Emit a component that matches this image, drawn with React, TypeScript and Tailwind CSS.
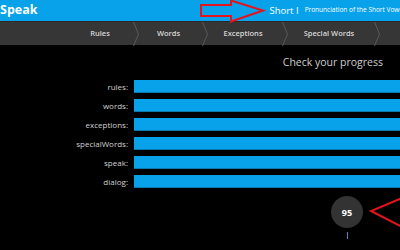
import React from 'react';

const NAV = [
  { label: 'Rules', w: 'w-[62px]' },
  { label: 'Words', w: 'w-[63px]' },
  { label: 'Exceptions', w: 'w-[74px]' },
  { label: 'Special Words', w: 'w-[86px]' },
  { label: 'Speak', w: 'w-[80px]' },
];

const ROWS = ['rules:', 'words:', 'exceptions:', 'specialWords:', 'speak:', 'dialog:'];

const Chevron = () => (
  <svg width="6" height="24" viewBox="0 0 6 24" className="shrink-0">
    <polyline points="0.5,0 5.5,12 0.5,24" fill="none" stroke="#5a5a5a" strokeWidth="1" />
  </svg>
);

export default function App() {
  return (
    <div
      className="relative w-[400px] h-[250px] overflow-hidden bg-black"
      style={{ fontFamily: '"Open Sans", "Liberation Sans", sans-serif' }}
    >
      {/* Header */}
      <div className="h-[21px] bg-[#07a2ea] flex items-center whitespace-nowrap">
        <span className="text-[12.5px] font-bold text-white leading-none">Speak</span>
        <span className="ml-[232px] text-[9.5px] text-white leading-none">Short I</span>
        <span className="ml-[6px] text-[6.5px] font-medium text-white leading-none">
          Pronunciation of the Short Vowel
        </span>
      </div>

      {/* Steps nav */}
      <div className="h-[24px] bg-[#363636] flex items-stretch whitespace-nowrap pl-[71px] border-t border-[#2a2a2a]">
        {NAV.map((n) => (
          <React.Fragment key={n.label}>
            <div className={`${n.w} shrink-0 flex items-center justify-center pr-[4px] text-[7.5px] font-semibold text-[#d6d6d6]`}>
              {n.label}
            </div>
            <Chevron />
          </React.Fragment>
        ))}
      </div>

      {/* Progress */}
      <div className="flex justify-end pr-[17px] pt-[9px]">
        <span className="text-[10.5px] text-[#cfcfcf] leading-[16px]">Check your progress</span>
      </div>

      <div className="mt-[10px] flex flex-col gap-[6px]">
        {ROWS.map((r) => (
          <div key={r} className="flex items-center h-[13px]">
            <div className="w-[128px] shrink-0 text-right text-[8px] text-[#d0d0d0] leading-none">{r}</div>
            <div className="ml-[6px] flex-1 h-[13px] bg-[#07a2ea] border-b border-[#0b79ad]" />
          </div>
        ))}
      </div>

      <div className="mt-[8px] ml-[331px] flex flex-col items-center w-[32px]">
        <div className="w-[32px] h-[32px] rounded-full bg-[#333333] flex items-center justify-center">
          <span className="text-[9px] font-bold text-white leading-none">95</span>
        </div>
        <div className="mt-[4px] w-px h-[7px] bg-[#3a8fc0]" />
      </div>

      {/* Annotation arrows */}
      <svg className="absolute left-0 top-0 pointer-events-none" width="400" height="250" viewBox="0 0 400 250">
        <polygon
          points="201,5 231,5 231,0.5 263,10.5 231,21.5 231,16 201,16"
          fill="none"
          stroke="#e3141b"
          strokeWidth="2"
          strokeLinejoin="miter"
        />
        <polyline points="402,198 371,211 402,227" fill="none" stroke="#e3141b" strokeWidth="2" />
      </svg>
    </div>
  );
}
